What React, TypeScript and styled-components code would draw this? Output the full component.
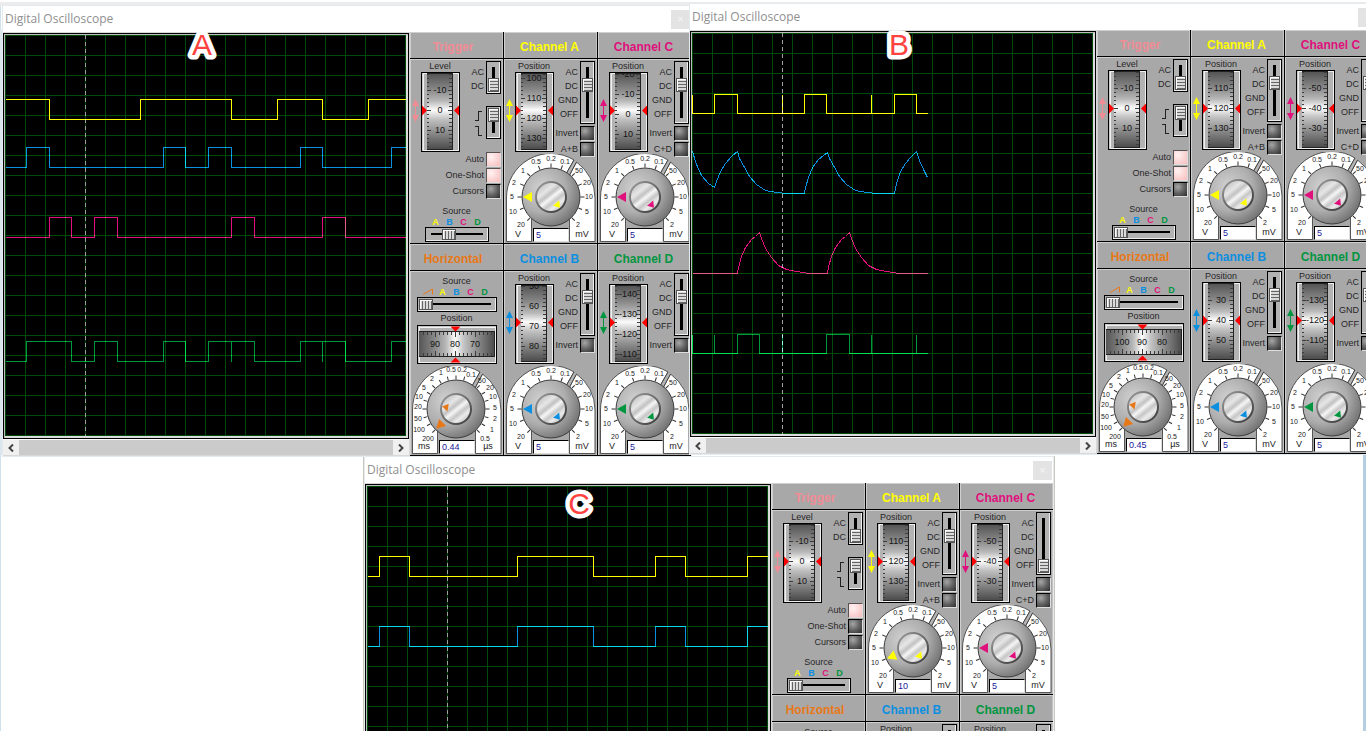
import React, { useId } from "react";
import styled, { createGlobalStyle, css } from "styled-components";

const YELLOW = "#ffff00";
const BLUE = "#0b8fe0";
const PINK = "#e0107c";
const GREEN = "#009640";
const ORANGE = "#e87817";
const ROSE = "#f08c94";
const FACE = "#a9a8a9";

const GlobalStyle = createGlobalStyle`
  * { box-sizing: border-box; }
  body { margin: 0; background: #fff; font-family: "Liberation Sans", Arial, sans-serif; }
`;

/* ---------- desktop and windows ---------- */

const Desktop = styled.main`
  position: relative;
  width: 100%;
  height: 100vh;
  overflow: hidden;
  background: linear-gradient(90deg, #cfe0ea 0 1px, #fff 1px calc(100% - 3px), #b4cfe0 calc(100% - 3px));
`;

const Backdrop = styled.div<{ $x: number; $y: number; $w: string; $h: number; $c: string }>`
  position: absolute;
  left: ${(p) => p.$x}px;
  top: ${(p) => p.$y}px;
  width: ${(p) => p.$w};
  height: ${(p) => p.$h}px;
  background: ${(p) => p.$c};
`;

const Window = styled.section<{ $x: number; $y: number }>`
  position: absolute;
  left: ${(p) => p.$x}px;
  top: ${(p) => p.$y}px;
  width: max-content;
  background: #fff;
  outline: 1px solid #e4eaee;
`;

const TitleBar = styled.header`
  display: flex;
  align-items: center;
  justify-content: space-between;
  height: 26px;
  padding: 0 1px 0 2px;
`;

const Title = styled.h1`
  margin: 0;
  font: 400 12px/16px "Open Sans", "Noto Sans", sans-serif;
  color: #8f8f8f;
`;

const CloseButton = styled.button`
  width: 19px;
  height: 19px;
  padding: 0;
  border: 0;
  background: #e3e3e4;
  color: #f6f6f6;
  font: 11px/19px "Liberation Sans", sans-serif;
`;

const WindowBody = styled.div`
  display: flex;
  background: #d8d8d8;
`;

const Badge = styled.svg<{ $x: number; $y: number }>`
  position: absolute;
  left: ${(p) => p.$x}px;
  top: ${(p) => p.$y}px;
  text {
    font-size: 30px;
    text-anchor: middle;
    fill: #ff4340;
    stroke: #fff;
    stroke-width: 9px;
    stroke-linejoin: round;
    paint-order: stroke fill;
  }
`;

/* ---------- scope display ---------- */

const DisplayColumn = styled.div`
  display: flex;
  flex-direction: column;
  padding: 1px 1px 0 0;
`;

const Display = styled.div`
  border: 1px solid #000;
  background: #dcdcdc;
  padding: 1px 2px 2px 1px;
  box-shadow: inset 1px 1px 0 #bdbdbd;
`;

const Grid = styled.svg`
  display: block;
  background: #000;
  isolation: isolate;
`;

const Trace = styled.polyline`
  fill: none;
  stroke-width: 1;
  mix-blend-mode: plus-lighter;
`;

const ScrollBar = styled.div`
  display: flex;
  height: 16px;
  background: #cbcbcb;
  border-top: 1px solid #fff;
`;

const ScrollButton = styled.button`
  display: flex;
  align-items: center;
  justify-content: center;
  width: 16px;
  padding: 0;
  border: 0;
  background: #f0f0f0;
`;

const ScrollTrack = styled.div`
  flex: 1;
`;

/* ---------- control panel ---------- */

const Panel = styled.div`
  display: grid;
  grid-template-columns: repeat(3, 93px);
  gap: 1px;
  padding-bottom: 1px;
  background: #000;
`;

const Module = styled.section`
  display: flex;
  flex-direction: column;
  gap: 1px;
`;

const ModuleTitle = styled.h2<{ $color: string; $shift?: boolean }>`
  margin: 0;
  padding: 2px ${(p) => (p.$shift ? 7 : 2)}px 0 0;
  height: 26px;
  text-align: center;
  font-size: 12px;
  line-height: 27px;
  font-weight: 700;
  color: ${(p) => p.$color};
  background: ${FACE};
  box-shadow: inset 1px 1px 0 #cfcfcf, inset -1px 0 0 #c4c4c4;
`;

const ModuleBody = styled.div`
  height: 184px;
  background: ${FACE};
  box-shadow: inset 1px 1px 0 #cfcfcf, inset -1px 0 0 #c4c4c4;
  font-size: 9px;
  line-height: 11px;
  color: #262626;
`;

const Upper = styled.div<{ $h: number }>`
  display: flex;
  height: ${(p) => p.$h}px;
`;

const DialColumn = styled.div`
  width: 51px;
  padding-top: 2px;
`;

const DialCaption = styled.div`
  width: 60px;
  text-align: center;
`;

const Drawing = styled.svg`
  display: block;
`;

const SwitchColumn = styled.div`
  display: flex;
  flex-direction: column;
  width: 40px;
  padding-top: 2px;
`;

const SwitchRow = styled.div<{ $gap?: number }>`
  display: flex;
  justify-content: flex-end;
  gap: 2px;
  margin-top: ${(p) => p.$gap ?? 0}px;
`;

const SwitchLabels = styled.label`
  display: flex;
  flex-direction: column;
  align-items: flex-end;
  padding-top: 4px;
  line-height: 14px;
`;

const thumbFace = "#d9d9d9";

const sliderBase = css`
  appearance: none;
  margin: 0;
  padding: 1px;
  border: 1px solid #000;
  outline: none;
  flex: none;
`;

const thumbBase = css`
  appearance: none;
  border: 1px solid #555;
  box-shadow: inset 1px 1px 0 #fff;
`;

const VerticalSlider = styled.input.attrs({ type: "range" })<{ $h: number }>`
  ${sliderBase}
  writing-mode: vertical-lr;
  width: 15px;
  height: ${(p) => p.$h}px;
  background: linear-gradient(#000, #000) 5px 5px / 3px calc(100% - 10px) no-repeat, #b2b2b2;
  box-shadow: inset -1px -1px 0 #eee;
  &::-webkit-slider-thumb {
    ${thumbBase}
    width: 11px;
    height: 14px;
    background: repeating-linear-gradient(180deg, ${thumbFace} 0 2px, #666 2px 3px);
  }
`;

const HorizontalSlider = styled.input.attrs({ type: "range" })<{ $w: number }>`
  ${sliderBase}
  display: block;
  width: ${(p) => p.$w}px;
  height: 15px;
  background: linear-gradient(#000, #000) 5px 5px / calc(100% - 10px) 2px no-repeat, #b2b2b2;
  box-shadow: inset -1px -1px 0 #eee;
  &::-webkit-slider-thumb {
    ${thumbBase}
    width: 14px;
    height: 11px;
    background: repeating-linear-gradient(90deg, ${thumbFace} 0 2px, #666 2px 3px);
  }
`;

const CheckLabel = styled.label`
  display: flex;
  align-items: center;
  justify-content: flex-end;
  gap: 2px;
  height: 15px;
  white-space: nowrap;
`;

const LampBox = styled.input.attrs({ type: "checkbox" })`
  appearance: none;
  flex: none;
  width: 15px;
  height: 15px;
  margin: 0;
  border: 1px solid #000;
  border-right-color: #ddd;
  border-bottom-color: #ddd;
  background: radial-gradient(circle at 30% 30%, #a6a6a6, #626262 50%, #2c2c2c);
  &:checked {
    background: radial-gradient(circle at 30% 30%, #fff2f2, #f8bcbc);
    border-color: #555 #ddd #ddd #555;
  }
`;

const ChannelChecks = styled.div`
  display: flex;
  flex-direction: column;
  gap: 1px;
  margin-top: 2px;
`;

const TriggerChecks = styled.div`
  display: flex;
  flex-direction: column;
  gap: 1px;
  padding-right: 2px;
`;

const Source = styled.div<{ $top: number }>`
  display: flex;
  flex-direction: column;
  align-items: center;
  padding-top: ${(p) => p.$top}px;
`;

const SourceLetters = styled.div`
  display: flex;
  height: 10px;
  line-height: 10px;
  font-weight: 700;
`;

const Letter = styled.span<{ $color: string }>`
  width: 14px;
  text-align: center;
  color: ${(p) => p.$color};
`;

const WideDial = styled.div`
  display: flex;
  flex-direction: column;
  align-items: center;
  gap: 1px;
  padding: 1px 0 2px;
`;

const KnobArea = styled.div`
  position: relative;
  height: 88px;
`;

const Reading = styled.input`
  position: absolute;
  left: 29px;
  top: 74px;
  width: 36px;
  height: 14px;
  padding: 0 0 0 2px;
  border: 1px solid #000;
  border-right-color: #ddd;
  border-bottom-color: #ddd;
  background: #fff;
  font: 9px/12px "Liberation Sans", Arial, sans-serif;
  color: #20209a;
`;

/* ---------- drawings ---------- */

const HiddenPaints = styled.svg`
  position: absolute;
`;

const DRUM_STOPS: [number, string][] = [
  [0, "#555"], [0.2, "#868686"], [0.36, "#b8b8b8"], [0.48, "#fcfcfc"], [0.6, "#c2c2c2"], [0.8, "#868686"], [1, "#4c4c4c"],
];

const SharedPaints = () => (
  <HiddenPaints width="0" height="0" aria-hidden="true">
    <defs>
      <linearGradient id="drumV" x1="0" y1="0" x2="0" y2="1">
        {DRUM_STOPS.map(([o, c]) => <stop key={o} offset={o} stopColor={c} />)}
      </linearGradient>
      <linearGradient id="drumH" x1="0" y1="0" x2="1" y2="0">
        {DRUM_STOPS.map(([o, c]) => <stop key={o} offset={o} stopColor={c} />)}
      </linearGradient>
      <radialGradient id="disc" cx="0.34" cy="0.36" r="0.75">
        <stop offset="0" stopColor="#d2d2d2" />
        <stop offset="0.55" stopColor="#adadad" />
        <stop offset="1" stopColor="#6a6a6a" />
      </radialGradient>
      <linearGradient id="cap" x1="0.1" y1="0" x2="0.9" y2="1">
        <stop offset="0" stopColor="#b4b4b4" />
        <stop offset="0.3" stopColor="#e6e6e6" />
        <stop offset="0.42" stopColor="#c2c2c2" />
        <stop offset="0.52" stopColor="#f6f6f6" />
        <stop offset="0.64" stopColor="#c6c6c6" />
        <stop offset="0.76" stopColor="#ececec" />
        <stop offset="1" stopColor="#a4a4a4" />
      </linearGradient>
      <linearGradient id="rim" x1="0" y1="0" x2="1" y2="1">
        <stop offset="0" stopColor="#9a9a9a" />
        <stop offset="1" stopColor="#383838" />
      </linearGradient>
    </defs>
  </HiddenPaints>
);

const range = (from: number, to: number, step: number) => {
  const out: number[] = [];
  for (let v = from; v <= to; v += step) out.push(v);
  return out;
};

type DialMarks = { values: string[]; first: number };

/* Thumb-wheel seen from the front; `first` is the y of the first number. */
const VerticalDial = ({ marks, color }: { marks: DialMarks; color: string }) => {
  const clip = useId();
  const base = marks.first - 20;
  return (
    <Drawing width="51" height="80" viewBox="0 13 51 80">
      <g stroke={color} fill={color}>
        <path d="M5.5 45V58" strokeWidth="1" />
        <path d="M5.5 40L9 47H2ZM5.5 63L9 56H2Z" stroke="none" />
      </g>
      <g shapeRendering="crispEdges">
        <rect x="11.5" y="13.5" width="38" height="79" fill="#c9c9c9" stroke="#000" />
        <rect x="13" y="14.5" width="35" height="76.5" fill="#b3b3b3" stroke="#f0f0f0" />
        <rect x="17" y="14" width="26" height="77" fill="#222" />
        <rect x="17" y="15" width="25" height="75" fill="url(#drumV)" />
      </g>
      <clipPath id={clip}>
        <rect x="17" y="15" width="26" height="75" />
      </clipPath>
      <g clipPath={`url(#${clip})`}>
        <g stroke="#3c3c3c" strokeWidth="1" shapeRendering="crispEdges">
          {range(base, base + 120, 4).map((y) => {
            const major = (y - base) % 20 === 0;
            return <path key={y} d={`M17 ${y + 0.5}h${major ? 4 : 2}M42 ${y + 0.5}h${major ? -4 : -3}`} />;
          })}
        </g>
        {marks.values.map((v, i) => (
          <text key={v} x="30" y={marks.first + i * 20 + 3} fontSize="9" textAnchor="middle" fill="#151515">
            {v}
          </text>
        ))}
      </g>
      <path d="M12 46.5L17 51.5L12 56.5ZM49 46.5L44 51.5L49 56.5Z" fill="#ff0000" />
    </Drawing>
  );
};

const HorizontalDial = ({ values }: { values: string[] }) => (
  <Drawing width="80" height="39" viewBox="7 54 80 39">
    <g shapeRendering="crispEdges">
      <rect x="7.5" y="54.5" width="79" height="38" fill="#c9c9c9" stroke="#000" />
      <rect x="9" y="56" width="76.5" height="35.5" fill="#b3b3b3" stroke="#f0f0f0" />
      <rect x="9" y="60" width="76" height="26" fill="#222" />
      <rect x="9" y="61" width="75" height="24" fill="url(#drumH)" />
      {range(13, 84, 4).map((x) => {
        const long = (x - 5) % 20 === 0 ? 5 : 3;
        return <path key={x} d={`M${x + 0.5} 61v${long}M${x + 0.5} 85v${-long}`} stroke="#3c3c3c" />;
      })}
    </g>
    {values.map((v, i) => (
      <text key={v} x={25 + i * 20} y="76" fontSize="9" textAnchor="middle" fill="#151515">
        {v}
      </text>
    ))}
    <path d="M40.5 55.5H50.5L45.5 60.5ZM40.5 91.5H50.5L45.5 86.5Z" fill="#ff0000" />
  </Drawing>
);

type KnobLabel = [string, number, number];

const VOLT_LABELS: KnobLabel[] = [
  ["20", 17, 166], ["10", 9, 153], ["5", 8, 138], ["2", 10, 124], ["1", 19, 112],
  ["0.5", 32, 103], ["0.2", 47, 100], ["0.1", 61, 103],
  ["50", 75, 112], ["20", 83, 124], ["10", 85, 138], ["5", 83, 153], ["2", 74, 166],
];

const TIME_LABELS: KnobLabel[] = [
  ["200", 18, 168], ["100", 9, 159], ["50", 8, 148], ["20", 8, 136], ["10", 9, 126], ["5", 14, 117],
  ["2", 22, 108], ["1", 31, 102], ["0.5", 41, 99], ["0.2", 52, 99], ["0.1", 61, 104],
  ["50", 72, 110], ["20", 80, 117], ["10", 83, 126], ["5", 85, 137], ["2", 85, 148], ["1", 82, 159], ["0.5", 75, 168],
];

const VOLT_TICKS = [-135, -112, -90, -67, -45, -22, 0, 20, 45, 67, 90, 112, 135];
const TIME_TICKS = [-135, -120, -105, -90, -75, -60, -45, -30, -15, 0, 15, 45, 60, 75, 90, 105, 120, 135];

type KnobProps = {
  color: string;
  value: string;
  name: string;
  time?: boolean;
  turn?: number;
  fine?: number;
};

const Knob = ({ color, value, name, time, turn = 0, fine = 50 }: KnobProps) => {
  const labels = time ? TIME_LABELS : VOLT_LABELS;
  const ticks = time ? TIME_TICKS : VOLT_TICKS;
  const units = time ? ["ms", "µs"] : ["V", "mV"];
  const cx = time ? 46 : 47;
  return (
    <KnobArea>
      <Drawing width="93" height="88" viewBox="0 95 93 88">
        <path
          d="M2.5 182.5V139A44.5 44 0 0 1 70 101L64 112L67 182.5H66V166L28 160V182.5Z"
          fill="#fff"
          stroke="none"
        />
        <path d="M2.5 182.5V139A44.3 44 0 0 1 70 101L62 115M27.5 182.5V162M27.5 182.5H2.5" fill="none" stroke="#555" />
        <path d="M72.5 103A44.3 44 0 0 1 91 139V182.5H65.5V160L60 150L65 117Z" fill="#fff" stroke="#555" />
        <path d="M27.5 182.5V160L66 160V182.5Z" fill={FACE} />
        <path d="M27.5 160V182.5M65.5 160V182.5" stroke="#555" />
        <path d="M70 101L72.5 103L65 117L62 115Z" fill="#b4b4b4" />
        <path d="M70 101L62 115M72.5 103L65 117" stroke="#444" />
        <g stroke="#333" strokeWidth="1">
          {ticks.map((a) => (
            <path key={a} d={`M${cx} 108.5V104.5`} transform={`rotate(${a} ${cx} 138)`} />
          ))}
        </g>
        <circle cx={cx} cy="138" r="29" fill="url(#disc)" stroke="#3c3c3c" strokeWidth="1" />
        <circle cx={cx} cy="138" r="15" fill="url(#cap)" stroke="url(#rim)" strokeWidth="2" />
        <path
          d={`M${cx - 28} 138L${cx - 19} 133V143Z`}
          fill={color}
          transform={`rotate(${turn} ${cx} 138)`}
        />
        <path
          d={`M${cx + 14} 138L${cx + 8} 134V142Z`}
          fill={color}
          transform={`rotate(${fine} ${cx} 138)`}
        />
        <g fontSize="7" textAnchor="middle" fill="#222">
          {labels.map(([t, x, y]) => (
            <text key={`${t}-${x}`} x={x} y={y + 2}>
              {t}
            </text>
          ))}
        </g>
        <g fontSize="9" textAnchor="middle" fill="#222">
          <text x="14" y="178">{units[0]}</text>
          <text x="78" y="178">{units[1]}</text>
        </g>
      </Drawing>
      <Reading aria-label={name} defaultValue={value} />
    </KnobArea>
  );
};

/* ---------- modules ---------- */

const Coupling = ({ options, value, height }: { options: string[]; value: number; height: number }) => {
  const id = useId();
  return (
    <SwitchRow>
      <SwitchLabels htmlFor={id}>
        {options.map((o) => (
          <span key={o}>{o}</span>
        ))}
      </SwitchLabels>
      <VerticalSlider id={id} $h={height} min={0} max={options.length - 1} defaultValue={value} />
    </SwitchRow>
  );
};

type ChannelSpec = { marks: DialMarks; coupling?: number; volts?: string; turn?: number };

const Channel = ({ name, color, sum, spec }: { name: string; color: string; sum?: string; spec: ChannelSpec }) => (
  <Module>
    <ModuleTitle $color={color}>{name}</ModuleTitle>
    <ModuleBody>
      <Upper $h={95}>
        <DialColumn>
          <DialCaption>Position</DialCaption>
          <VerticalDial marks={spec.marks} color={color} />
        </DialColumn>
        <SwitchColumn>
          <Coupling options={["AC", "DC", "GND", "OFF"]} value={spec.coupling ?? 1} height={63} />
          <ChannelChecks>
            <CheckLabel>
              Invert
              <LampBox />
            </CheckLabel>
            {sum && (
              <CheckLabel>
                {sum}
                <LampBox />
              </CheckLabel>
            )}
          </ChannelChecks>
        </SwitchColumn>
      </Upper>
      <Knob color={color} value={spec.volts ?? "5"} name={`${name} scale`} turn={spec.turn} />
    </ModuleBody>
  </Module>
);

const CHANNEL_LETTERS: [string, string][] = [["A", YELLOW], ["B", BLUE], ["C", PINK], ["D", GREEN]];

const Trigger = ({ oneShot, source }: { oneShot: boolean; source: number }) => {
  const edge = useId();
  const src = useId();
  return (
    <Module>
      <ModuleTitle $color={ROSE} $shift>Trigger</ModuleTitle>
      <ModuleBody>
        <Upper $h={93}>
          <DialColumn>
            <DialCaption>Level</DialCaption>
            <VerticalDial marks={{ values: ["-10", "0", "10"], first: 31 }} color={ROSE} />
          </DialColumn>
          <SwitchColumn>
            <Coupling options={["AC", "DC"]} value={1} height={33} />
            <SwitchRow $gap={12}>
              <label htmlFor={edge} aria-label="Edge">
                <Drawing width="10" height="33" fill="none" stroke="#222" shapeRendering="crispEdges">
                  <path d="M1 14.5H4.5V5.5H8M1 20.5H4.5V29.5H8" />
                </Drawing>
              </label>
              <VerticalSlider id={edge} $h={33} min={0} max={1} defaultValue={0} />
            </SwitchRow>
          </SwitchColumn>
        </Upper>
        <TriggerChecks>
          <CheckLabel>
            Auto
            <LampBox defaultChecked />
          </CheckLabel>
          <CheckLabel>
            One-Shot
            <LampBox defaultChecked={oneShot} />
          </CheckLabel>
          <CheckLabel>
            Cursors
            <LampBox />
          </CheckLabel>
        </TriggerChecks>
        <Source $top={7}>
          <label htmlFor={src}>Source</label>
          <SourceLetters>
            {CHANNEL_LETTERS.map(([l, c]) => (
              <Letter key={l} $color={c}>{l}</Letter>
            ))}
          </SourceLetters>
          <HorizontalSlider id={src} $w={64} min={0} max={3} defaultValue={source} />
        </Source>
      </ModuleBody>
    </Module>
  );
};

const Horizontal = ({ values, time }: { values: string[]; time: string }) => {
  const src = useId();
  return (
    <Module>
      <ModuleTitle $color={ORANGE} $shift>Horizontal</ModuleTitle>
      <ModuleBody>
        <Source $top={5}>
          <label htmlFor={src}>Source</label>
          <SourceLetters>
            <Drawing width="14" height="10" fill="none" stroke={ORANGE}>
              <path d="M1 7.5L10.5 2V7.5" />
            </Drawing>
            {CHANNEL_LETTERS.map(([l, c]) => (
              <Letter key={l} $color={c}>{l}</Letter>
            ))}
          </SourceLetters>
          <HorizontalSlider id={src} $w={80} min={0} max={4} defaultValue={0} />
        </Source>
        <WideDial>
          <span>Position</span>
          <HorizontalDial values={values} />
        </WideDial>
        <Knob color={ORANGE} value={time} name="Time base" time turn={-45} fine={190} />
      </ModuleBody>
    </Module>
  );
};

/* ---------- traces ---------- */

/* Square wave: level flips at every x in `edges`. */
const square = (hi: number, lo: number, startHigh: boolean, edges: number[], end = 400) => {
  let y = startHigh ? hi : lo;
  const pts = [`0,${y}`];
  edges.forEach((x) => {
    pts.push(`${x},${y}`);
    y = y === hi ? lo : hi;
    pts.push(`${x},${y}`);
  });
  pts.push(`${end},${y}`);
  return pts.join(" ");
};

type TraceSpec = { color: string; points: string };

type ScopeSpec = {
  x: number;
  y: number;
  cursor: number;
  traces: TraceSpec[];
  oneShot: boolean;
  source: number;
  horizontal: string[];
  time: string;
  a: ChannelSpec;
  b: ChannelSpec;
  c: ChannelSpec;
  d: ChannelSpec;
};

const at = (first: number, ...values: string[]): DialMarks => ({ values, first });

const SCOPE_A: ScopeSpec = {
  x: 3,
  y: 6,
  cursor: 80,
  traces: [
    { color: YELLOW, points: square(64, 84, true, [44, 135, 226, 272, 317, 363]) },
    { color: BLUE, points: square(112, 132, false, [21, 44, 158, 180, 203, 226, 295, 317, 386]) },
    { color: PINK, points: square(182, 202, false, [44, 66, 89, 112, 226, 249, 317, 340]) },
    {
      color: GREEN,
      points: square(306, 326, false, [21, 66, 89, 112, 158, 180, 203, 226, 226, 249, 295, 317, 317, 340, 386]),
    },
  ],
  oneShot: true,
  source: 1,
  horizontal: ["90", "80", "70"],
  time: "0.44",
  a: { marks: at(19, "100", "110", "120", "130") },
  b: { marks: at(15, "50", "60", "70", "80") },
  c: { marks: at(15, "-20", "-10", "0", "10") },
  d: { marks: at(23, "-140", "-130", "-120", "-110") },
};

const SCOPE_B: ScopeSpec = {
  x: 690,
  y: 4,
  cursor: 90,
  traces: [
    {
      color: YELLOW,
      points: square(61, 80, true, [0, 22, 45, 90, 90, 112, 134, 179, 179, 202, 224], 235),
    },
    {
      color: BLUE,
      points:
        "0,118 4,131 9,142 16,150 22,154 24,148 28,138 33,130 39,123 45,118 47,125 51,132 57,143 64,151 73,157 84,159 95,160 112,160 113,154 116,144 120,134 126,126 131,122 135,119 137,125 141,132 147,143 154,151 163,157 174,159 184,160 202,160 204,150 208,138 213,130 218,124 224,118 227,127 231,136 235,144",
    },
    {
      color: PINK,
      points:
        "0,240 45,240 46,234 49,223 53,214 59,206 63,203 67,199 69,205 73,215 79,224 86,232 94,236 104,238 117,240 135,240 136,233 139,223 143,214 149,206 153,203 157,199 159,205 163,215 169,224 176,232 184,236 194,238 207,240 235,240",
    },
    {
      color: GREEN,
      points: square(301, 320, true, [0, 22, 22, 45, 67, 90, 90, 134, 157, 179, 179, 224, 224], 235),
    },
  ],
  oneShot: true,
  source: 0,
  horizontal: ["100", "90", "80"],
  time: "0.45",
  a: { marks: at(31, "110", "120", "130") },
  b: { marks: at(31, "30", "40", "50") },
  c: { marks: at(31, "-50", "-40", "-30") },
  d: { marks: at(31, "-130", "-120", "-110") },
};

const SCOPE_C: ScopeSpec = {
  x: 365,
  y: 457,
  cursor: 80,
  traces: [
    { color: YELLOW, points: square(70, 90, false, [12, 42, 150, 226, 288, 318, 380]) },
    { color: BLUE, points: square(140, 160, false, [12, 42, 150, 226, 288, 318, 380]) },
  ],
  oneShot: false,
  source: 0,
  horizontal: ["90", "80", "70"],
  time: "0.45",
  a: { marks: at(31, "110", "120", "130"), volts: "10", turn: -22 },
  b: { marks: at(31, "30", "40", "50") },
  c: { marks: at(31, "-50", "-40", "-30"), coupling: 3 },
  d: { marks: at(31, "-130", "-120", "-110") },
};

const Oscilloscope = ({ spec }: { spec: ScopeSpec }) => (
  <Window $x={spec.x} $y={spec.y}>
    <TitleBar>
      <Title>Digital Oscilloscope</Title>
      <CloseButton aria-label="Close">×</CloseButton>
    </TitleBar>
    <WindowBody>
      <DisplayColumn>
        <Display>
          <Grid width="401" height="401" shapeRendering="crispEdges">
            <g transform="translate(0.5 0.5)" stroke="#004b0c">
              {range(0, 400, 20).map((v) => (
                <path key={v} d={`M${v} -0.5V400.5M-0.5 ${v}H400.5`} />
              ))}
              <path d={`M${spec.cursor} -0.5V400.5`} stroke="#a0a0a0" strokeDasharray="4 3" />
            </g>
            {spec.traces.map((t) => (
              <Trace key={t.color} points={t.points} stroke={t.color} transform="translate(0.5 0.5)" />
            ))}
          </Grid>
        </Display>
        <ScrollBar>
          <ScrollButton aria-label="Scroll left">
            <svg width="8" height="8" fill="none" stroke="#444" strokeWidth="2">
              <path d="M6 0.5L2.5 4L6 7.5" />
            </svg>
          </ScrollButton>
          <ScrollTrack />
          <ScrollButton aria-label="Scroll right">
            <svg width="8" height="8" fill="none" stroke="#444" strokeWidth="2">
              <path d="M2 0.5L5.5 4L2 7.5" />
            </svg>
          </ScrollButton>
        </ScrollBar>
      </DisplayColumn>
      <Panel>
        <Trigger oneShot={spec.oneShot} source={spec.source} />
        <Channel name="Channel A" color={YELLOW} sum="A+B" spec={spec.a} />
        <Channel name="Channel C" color={PINK} sum="C+D" spec={spec.c} />
        <Horizontal values={spec.horizontal} time={spec.time} />
        <Channel name="Channel B" color={BLUE} spec={spec.b} />
        <Channel name="Channel D" color={GREEN} spec={spec.d} />
      </Panel>
    </WindowBody>
  </Window>
);

const LetterBadge = ({ x, y, letter }: { x: number; y: number; letter: string }) => (
  <Badge $x={x} $y={y} width="40" height="36">
    <text x="20" y="27">{letter}</text>
  </Badge>
);

export default function App() {
  return (
    <Desktop>
      <GlobalStyle />
      <SharedPaints />
      <Backdrop $x={0} $y={0} $w="100%" $h={6} $c="linear-gradient(#fff 0 2px, #ececec 2px)" />
      <Backdrop $x={0} $y={30} $w="3px" $h={425} $c="#dbe6ec" />
      <Backdrop $x={363} $y={456} $w="692px" $h={275} $c="#c9c8bf" />
      <Oscilloscope spec={SCOPE_C} />
      <Oscilloscope spec={SCOPE_A} />
      <Oscilloscope spec={SCOPE_B} />
      <LetterBadge x={182} y={28} letter="A" />
      <LetterBadge x={879} y={28} letter="B" />
      <LetterBadge x={559} y={487} letter="C" />
    </Desktop>
  );
}
